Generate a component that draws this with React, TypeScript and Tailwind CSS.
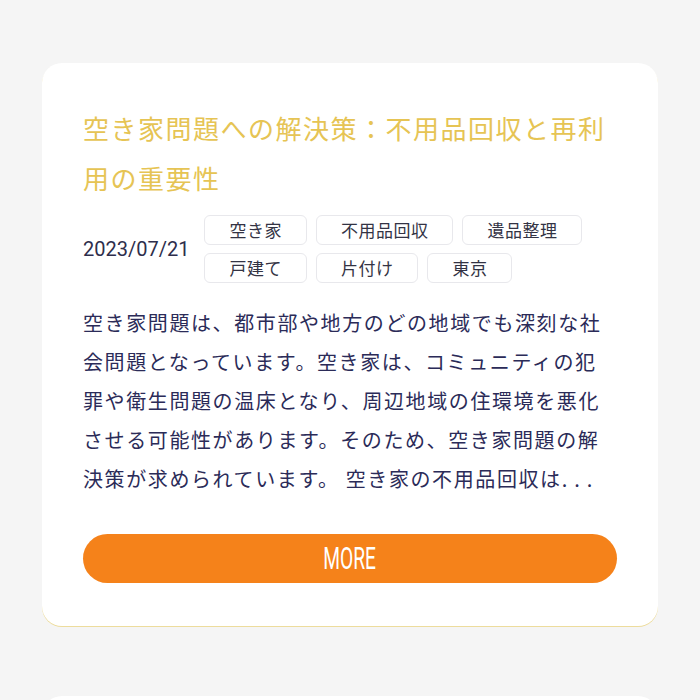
import React from 'react';

const tags = ['空き家', '不用品回収', '遺品整理', '戸建て', '片付け', '東京'];

const bodyLines = [
  '空き家問題は、都市部や地方のどの地域でも深刻な社',
  '会問題となっています。空き家は、コミュニティの犯',
  '罪や衛生問題の温床となり、周辺地域の住環境を悪化',
  'させる可能性があります。そのため、空き家問題の解',
  '決策が求められています。 空き家の不用品回収は',
];

const jp = { fontFamily: '"Noto Sans CJK JP", "Noto Sans", sans-serif' };
const roboto = { fontFamily: 'Roboto, "Liberation Sans", sans-serif' };

const Tag = ({ label }: { label: string }) => (
  <div
    className="flex h-[30px] items-center justify-center rounded-md border border-[#e8e8ec] bg-white px-6 text-[17px] tracking-[0.5px] text-[#333344]"
    style={jp}
  >
    {label}
  </div>
);

const ArticleCard = () => {
  return (
    <div className="rounded-[20px] bg-white px-[41px] pt-[40px] pb-[43px] shadow-[0_1px_0_#eddc9c]">
      <h2
        className="text-[26px] font-normal leading-[50px] tracking-[1.5px] text-[#e6c454]"
        style={jp}
      >
        空き家問題への解決策：不用品回収と再利
        <br />
        用の重要性
      </h2>
      <div className="mt-3 flex items-center gap-[15px]">
        <div className="text-[20px] text-[#2e2e4c]" style={roboto}>
          2023/07/21
        </div>
        <div className="flex flex-1 flex-wrap gap-x-[9px] gap-y-2">
          {tags.map((t) => (
            <Tag key={t} label={t} />
          ))}
        </div>
      </div>
      <p
        className="mt-5 whitespace-nowrap text-[20px] leading-[39px] tracking-[1.6px] text-[#2b2b58]"
        style={jp}
      >
        {bodyLines.map((l, i) => (
          <React.Fragment key={i}>
            {l}
            {i < bodyLines.length - 1 ? <br /> : <span className="tracking-[7px]">...</span>}
          </React.Fragment>
        ))}
      </p>
      <button className="mt-[36px] flex h-[49px] w-full items-center justify-center rounded-full bg-[#f5821a]">
        <span
          className="inline-block scale-x-[0.62] text-[31px] leading-none text-white"
          style={roboto}
        >
          MORE
        </span>
      </button>
    </div>
  );
};

export default function App() {
  return (
    <div className="h-[700px] overflow-hidden bg-[#f5f5f5] px-[42px] pt-[63px]">
      <div className="flex flex-col gap-[70px]">
        <ArticleCard />
        {/* next card, only its top edge is in view */}
        <div className="h-[40px] rounded-t-[20px] bg-white" />
      </div>
    </div>
  );
}
